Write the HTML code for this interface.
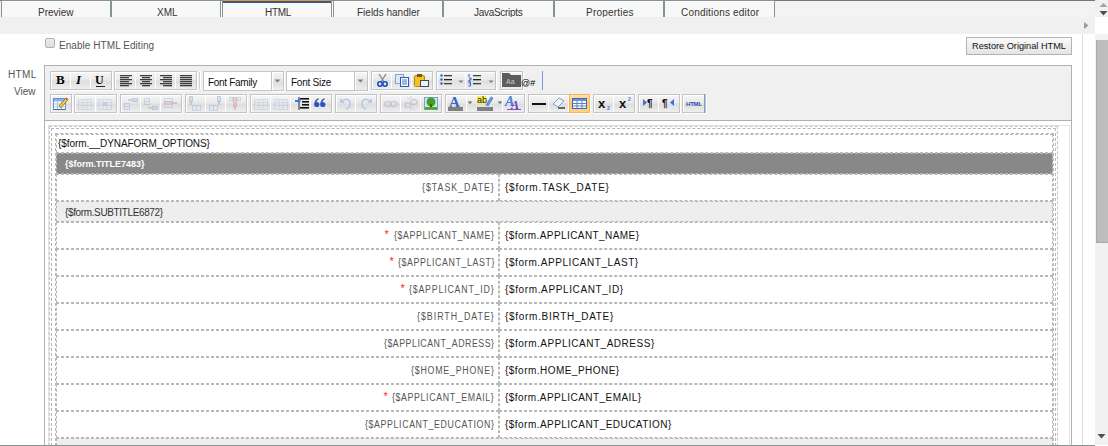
<!DOCTYPE html><html><head><meta charset="utf-8"><style>
*{margin:0;padding:0;box-sizing:border-box}
html,body{width:1108px;height:446px;overflow:hidden;background:#fff;font-family:"Liberation Sans",sans-serif;position:relative}
.abs{position:absolute}
.t{position:absolute;white-space:nowrap;line-height:1}
.grp{position:absolute;border:1px solid #c4c4c4;box-shadow:inset 1px 1px 0 #fff,1px 1px 0 #fff;background:linear-gradient(#f6f6f6,#e9e9e9 45%,#dedede 55%,#eeeeee)}
.bd{position:absolute;top:0;bottom:0;width:1px;background:#fff}
.dh{position:absolute;height:1px;background-image:linear-gradient(to right,#bbb 50%,transparent 50%);background-size:6px 1px}
.dv{position:absolute;width:1px;background-image:linear-gradient(to bottom,#bbb 50%,transparent 50%);background-size:1px 6px}
</style></head><body>
<div class="abs" style="left:0;top:0;width:1095px;height:17px;background:#f3f3f3;border-top:1px solid #787878"></div>
<div class="abs" style="left:1px;top:0;width:110px;height:17px;background:#f8f8f8;border-left:1px solid #879292;border-right:1px solid #879292;border-top:1px solid #879292"></div>
<div class="abs" style="left:2px;top:1px;width:108px;height:1px;background:#fff"></div>
<div class="t" style="left:38.00px;top:7.5px;letter-spacing:0.000px;font-size:10px;color:#333">Preview</div>
<div class="abs" style="left:111px;top:0;width:110px;height:17px;background:#f8f8f8;border-left:1px solid #879292;border-right:1px solid #879292;border-top:1px solid #879292"></div>
<div class="abs" style="left:112px;top:1px;width:108px;height:1px;background:#fff"></div>
<div class="t" style="left:157.00px;top:7.5px;letter-spacing:0.000px;font-size:10px;color:#333">XML</div>
<div class="abs" style="left:222px;top:0;width:110px;height:17px;background:#f8f8f8;border-left:1px solid #879292;border-right:1px solid #879292;border-top:1px solid #879292"></div>
<div class="abs" style="left:223px;top:1px;width:108px;height:1px;background:#fff"></div>
<div class="abs" style="left:223px;top:0;width:108px;height:1px;background:#f7941d"></div>
<div class="abs" style="left:223px;top:1px;width:108px;height:2px;background:#2c5a9e"></div>
<div class="t" style="left:265.00px;top:7.5px;letter-spacing:-0.333px;font-size:10px;color:#333">HTML</div>
<div class="abs" style="left:333px;top:0;width:110px;height:17px;background:#f8f8f8;border-left:1px solid #879292;border-right:1px solid #879292;border-top:1px solid #879292"></div>
<div class="abs" style="left:334px;top:1px;width:108px;height:1px;background:#fff"></div>
<div class="t" style="left:357.00px;top:7.5px;letter-spacing:0.000px;font-size:10px;color:#333">Fields handler</div>
<div class="abs" style="left:443px;top:0;width:111px;height:17px;background:#f8f8f8;border-left:1px solid #879292;border-right:1px solid #879292;border-top:1px solid #879292"></div>
<div class="abs" style="left:444px;top:1px;width:109px;height:1px;background:#fff"></div>
<div class="t" style="left:474.00px;top:7.5px;letter-spacing:-0.300px;font-size:10px;color:#333">JavaScripts</div>
<div class="abs" style="left:554px;top:0;width:110px;height:17px;background:#f8f8f8;border-left:1px solid #879292;border-right:1px solid #879292;border-top:1px solid #879292"></div>
<div class="abs" style="left:555px;top:1px;width:108px;height:1px;background:#fff"></div>
<div class="t" style="left:586.00px;top:7.5px;letter-spacing:0.222px;font-size:10px;color:#333">Properties</div>
<div class="abs" style="left:664px;top:0;width:111px;height:17px;background:#f8f8f8;border-left:1px solid #879292;border-right:1px solid #879292;border-top:1px solid #879292"></div>
<div class="abs" style="left:665px;top:1px;width:109px;height:1px;background:#fff"></div>
<div class="t" style="left:681.00px;top:7.5px;letter-spacing:0.188px;font-size:10px;color:#333">Conditions editor</div>
<div class="abs" style="left:221px;top:1px;width:1px;height:16px;background:#fff"></div>
<div class="abs" style="left:332px;top:1px;width:1px;height:16px;background:#fff"></div>
<div class="abs" style="left:1095px;top:0;width:13px;height:17px;background:#f1f1f1"></div>
<svg class="abs" style="left:1095px;top:0" width="13" height="17"><path d="M5 3 L9 7 L1 7 Z" fill="#a3a3a3" transform="translate(3.5,0)"/><path d="M1 11 L9 11 L5 15.5 Z" fill="#505050" transform="translate(3.5,0)"/></svg>
<div class="abs" style="left:0;top:17px;width:1095px;height:17px;background:#f0f0f0"></div>
<svg class="abs" style="left:1083px;top:21px" width="8" height="10"><path d="M1 1 L5.5 4.5 L1 8 Z" fill="#9a9a9a"/></svg>
<div class="abs" style="left:1082px;top:34px;width:1px;height:411px;background:#dcdcdc"></div>
<div class="abs" style="left:1095px;top:34px;width:13px;height:411px;background:#f1f1f1"></div>
<div class="abs" style="left:1096px;top:40px;width:12px;height:203px;background:#bdbdbd;border-left:1px solid #aaa;border-bottom:1px solid #aaa"></div>
<svg class="abs" style="left:1095px;top:430px" width="13" height="12"><path d="M2.5 4 L10.5 4 L6.5 8.5 Z" fill="#505050"/></svg>
<div class="abs" style="left:0;top:445px;width:1095px;height:1px;background:#879292"></div>
<div class="abs" style="left:45px;top:38px;width:10px;height:10px;border:1px solid #b2b2b2;border-radius:2px;background:linear-gradient(#ececec,#dedede)"></div>
<div class="t" style="left:59.00px;top:41px;letter-spacing:0.056px;font-size:10px;color:#555">Enable HTML Editing</div>
<div class="abs" style="left:966px;top:37px;width:106px;height:18px;border:1px solid #b4b4b4;background:linear-gradient(#fbfbfb,#e4e4e4)"></div>
<div class="t" style="left:972.00px;top:42px;letter-spacing:0.000px;font-size:9.2px;color:#111">Restore Original HTML</div>
<div class="t" style="left:8.00px;top:70px;letter-spacing:0.333px;font-size:10px;color:#555">HTML</div>
<div class="t" style="left:14.00px;top:87px;letter-spacing:0.000px;font-size:10px;color:#555">View</div>
<div class="abs" style="left:44px;top:65px;width:1028px;height:400px;border:1px solid #b0b0b0;background:#f0f0f0"></div>
<div class="abs" style="left:44px;top:120px;width:1028px;height:340px;border:1px solid #b0b0b0;background:#fff"></div>
<div class="grp" style="left:50px;top:71px;width:62px;height:19px">
<div class="bd" style="left:19px"></div>
<div class="bd" style="left:39px"></div>
</div>
<div class="grp" style="left:114px;top:71px;width:83px;height:19px">
<div class="bd" style="left:20px"></div>
<div class="bd" style="left:40px"></div>
<div class="bd" style="left:60px"></div>
</div>
<div class="abs" style="left:199px;top:72px;width:1px;height:17px;background:#cfcfcf;box-shadow:1px 0 0 #fff"></div>
<div class="abs" style="left:203px;top:71px;width:69px;height:20px;background:#fff;border:1px solid #c6c6c6"></div>
<div class="grp" style="left:271px;top:71px;width:13px;height:20px"></div>
<svg class="abs" style="left:274px;top:79px" width="8" height="5"><path d="M0.5 0.5 L6.5 0.5 L3.5 3.5 Z" fill="#808080"/></svg>
<div class="t" style="left:208.00px;top:78px;letter-spacing:-0.300px;font-size:10px;color:#111">Font Family</div>
<div class="abs" style="left:286px;top:71px;width:69px;height:20px;background:#fff;border:1px solid #c6c6c6"></div>
<div class="grp" style="left:354px;top:71px;width:14px;height:20px"></div>
<svg class="abs" style="left:357px;top:79px" width="8" height="5"><path d="M0.5 0.5 L6.5 0.5 L3.5 3.5 Z" fill="#808080"/></svg>
<div class="t" style="left:291.00px;top:78px;letter-spacing:-0.250px;font-size:10px;color:#111">Font Size</div>
<div class="grp" style="left:371px;top:71px;width:62px;height:19px">
<div class="bd" style="left:19px"></div>
<div class="bd" style="left:39px"></div>
</div>
<div class="grp" style="left:436px;top:71px;width:60px;height:19px">
<div class="bd" style="left:28px"></div>
</div>
<div class="grp" style="left:500px;top:71px;width:23px;height:19px">
</div>
<div class="abs" style="left:542px;top:71px;width:1px;height:19px;background:#7d9bd8"></div>
<div class="grp" style="left:50px;top:94px;width:22px;height:19px">
</div>
<div class="grp" style="left:74px;top:94px;width:43px;height:19px">
<div class="bd" style="left:20px"></div>
</div>
<div class="grp" style="left:120px;top:94px;width:62px;height:19px">
<div class="bd" style="left:19px"></div>
<div class="bd" style="left:39px"></div>
</div>
<div class="grp" style="left:185px;top:94px;width:62px;height:19px">
<div class="bd" style="left:19px"></div>
<div class="bd" style="left:39px"></div>
</div>
<div class="grp" style="left:250px;top:94px;width:82px;height:19px">
<div class="bd" style="left:19px"></div>
<div class="bd" style="left:39px"></div>
<div class="bd" style="left:59px"></div>
</div>
<div class="grp" style="left:335px;top:94px;width:42px;height:19px">
<div class="bd" style="left:19px"></div>
</div>
<div class="grp" style="left:380px;top:94px;width:62px;height:19px">
<div class="bd" style="left:19px"></div>
<div class="bd" style="left:39px"></div>
</div>
<div class="grp" style="left:445px;top:94px;width:80px;height:19px">
<div class="bd" style="left:20px"></div>
<div class="bd" style="left:56px"></div>
</div>
<div class="grp" style="left:528px;top:94px;width:62px;height:19px">
<div class="bd" style="left:19px"></div>
<div class="bd" style="left:39px"></div>
</div>
<div class="grp" style="left:593px;top:94px;width:42px;height:19px">
<div class="bd" style="left:19px"></div>
</div>
<div class="grp" style="left:638px;top:94px;width:42px;height:19px">
<div class="bd" style="left:19px"></div>
</div>
<div class="grp" style="left:682px;top:94px;width:24px;height:19px">
</div>
<div class="abs" style="left:569px;top:94px;width:21px;height:19px;border:1px solid #f2b45a;background:linear-gradient(#ffe3a8,#ffc76a 50%,#ffd38a)"></div>
<div class="abs" style="left:704px;top:94px;width:1px;height:19px;background:#7d9bd8"></div>
<div class="t" style="left:56px;top:72px;font:bold 13px 'Liberation Serif',serif;color:#000">B</div>
<div class="t" style="left:76px;top:72px;font:bold italic 13px 'Liberation Serif',serif;color:#000">I</div>
<div class="t" style="left:95px;top:73px;font:bold 12px 'Liberation Serif',serif;color:#000">U</div>
<div class="abs" style="left:96px;top:86px;width:9px;height:1px;background:#222"></div>
<svg class="abs" style="left:120px;top:75px" width="14" height="12" viewBox="0 0 14 12"><rect x="0" y="0" width="12" height="1.3" fill="#3c3c3c"/><rect x="0" y="2" width="9" height="1.3" fill="#3c3c3c"/><rect x="0" y="4" width="12" height="1.3" fill="#3c3c3c"/><rect x="0" y="6" width="9" height="1.3" fill="#3c3c3c"/><rect x="0" y="8" width="12" height="1.3" fill="#3c3c3c"/><rect x="0" y="10" width="9" height="1.3" fill="#3c3c3c"/></svg>
<svg class="abs" style="left:140px;top:75px" width="14" height="12" viewBox="0 0 14 12"><rect x="0" y="0" width="12" height="1.3" fill="#3c3c3c"/><rect x="2" y="2" width="8" height="1.3" fill="#3c3c3c"/><rect x="0" y="4" width="12" height="1.3" fill="#3c3c3c"/><rect x="2" y="6" width="8" height="1.3" fill="#3c3c3c"/><rect x="0" y="8" width="12" height="1.3" fill="#3c3c3c"/><rect x="2" y="10" width="8" height="1.3" fill="#3c3c3c"/></svg>
<svg class="abs" style="left:160px;top:75px" width="14" height="12" viewBox="0 0 14 12"><rect x="0" y="0" width="12" height="1.3" fill="#3c3c3c"/><rect x="3" y="2" width="9" height="1.3" fill="#3c3c3c"/><rect x="0" y="4" width="12" height="1.3" fill="#3c3c3c"/><rect x="3" y="6" width="9" height="1.3" fill="#3c3c3c"/><rect x="0" y="8" width="12" height="1.3" fill="#3c3c3c"/><rect x="3" y="10" width="9" height="1.3" fill="#3c3c3c"/></svg>
<svg class="abs" style="left:180px;top:75px" width="14" height="12" viewBox="0 0 14 12"><rect x="0" y="0" width="12" height="1.3" fill="#3c3c3c"/><rect x="0" y="2" width="12" height="1.3" fill="#3c3c3c"/><rect x="0" y="4" width="12" height="1.3" fill="#3c3c3c"/><rect x="0" y="6" width="12" height="1.3" fill="#3c3c3c"/><rect x="0" y="8" width="12" height="1.3" fill="#3c3c3c"/><rect x="0" y="10" width="12" height="1.3" fill="#3c3c3c"/></svg>
<svg class="abs" style="left:377px;top:74px" width="11" height="13" viewBox="0 0 11 13"><path d="M2 0 L7 8 M9 0 L4 8" stroke="#8090a0" stroke-width="1.4"/><circle cx="3" cy="10" r="2.2" fill="none" stroke="#1a4fc0" stroke-width="1.6"/><circle cx="8" cy="10" r="2.2" fill="none" stroke="#1a4fc0" stroke-width="1.6"/></svg>
<svg class="abs" style="left:395px;top:74px" width="15" height="13" viewBox="0 0 15 13"><rect x="0.5" y="0.5" width="8" height="9" fill="#dfe8f5" stroke="#8aa4c8"/><rect x="5.5" y="3.5" width="8" height="9" fill="#f4f8ff" stroke="#2a5cc0"/><path d="M7 6h5M7 8h5M7 10h5" stroke="#4a78d0"/></svg>
<svg class="abs" style="left:414px;top:74px" width="15" height="13" viewBox="0 0 15 13"><rect x="0.5" y="1.5" width="10" height="11" rx="1" fill="#f2c420" stroke="#b08a10"/><rect x="3" y="0" width="5" height="3" fill="#705a20"/><rect x="6.5" y="6.5" width="8" height="6" fill="#eef2f8" stroke="#404850"/></svg>
<svg class="abs" style="left:440px;top:74px" width="13" height="12" viewBox="0 0 13 12"><circle cx="1.5" cy="1.5" r="1.2" fill="#3060d0"/><circle cx="1.5" cy="5.5" r="1.2" fill="#3060d0"/><circle cx="1.5" cy="9.5" r="1.2" fill="#3060d0"/><rect x="4" y="1" width="8" height="1.3" fill="#404040"/><rect x="4" y="5" width="8" height="1.3" fill="#202020"/><rect x="4" y="9" width="8" height="1.3" fill="#404040"/></svg>
<svg class="abs" style="left:458px;top:80px" width="7" height="4" viewBox="0 0 7 4"><path d="M0.5 0.5 L5.5 0.5 L3 3 Z" fill="#808080"/></svg>
<svg class="abs" style="left:468px;top:74px" width="14" height="13" viewBox="0 0 14 13"><path d="M1 0v3M1 4h2v2h-2v2h2M0.5 9h2v3h-2" stroke="#3060d0" stroke-width="1" fill="none"/><rect x="5" y="1" width="8" height="1.3" fill="#404040"/><rect x="5" y="5" width="8" height="1.3" fill="#202020"/><rect x="5" y="9" width="8" height="1.3" fill="#404040"/></svg>
<svg class="abs" style="left:488px;top:80px" width="7" height="4" viewBox="0 0 7 4"><path d="M0.5 0.5 L5.5 0.5 L3 3 Z" fill="#808080"/></svg>
<svg class="abs" style="left:502px;top:73px" width="19" height="14" viewBox="0 0 19 14"><path d="M0 0h7l2 2h10v12h-19z" fill="#5c5c5c"/><text x="4" y="11" font-family="Liberation Sans" font-size="7" fill="#ccc">Aa</text></svg>
<div class="t" style="left:521px;top:79px;font-size:9px;color:#000">@#</div>
<svg class="abs" style="left:53px;top:97px" width="16" height="14" viewBox="0 0 16 14"><rect x="0.5" y="1.5" width="12" height="11" fill="#fff" stroke="#6a90c8"/><rect x="1" y="2" width="11" height="2.5" fill="#8ab4ec"/><path d="M0.5 7h12M0.5 9.8h12M4.5 4.5v8M8.5 4.5v8" stroke="#a8c0e4"/><path d="M0.5 12.5h12" stroke="#4a6aa0"/><path d="M6 9 L12.5 1.5 L14.5 3.2 L8 10.8 Z" fill="#f2d040" stroke="#705818" stroke-width="0.7"/><path d="M12.5 1.5 L13.5 0.5 L15.5 2.2 L14.5 3.2 Z" fill="#e06040"/></svg>
<svg class="abs" style="left:78px;top:99px" width="15" height="12" viewBox="0 0 15 12"><g opacity="0.3"><rect x="0.5" y="0.5" width="13" height="10" fill="#e8eef8" stroke="#9db3d8"/><path d="M0.5 3.5h13M0.5 6.5h13M5 0.5v10M9 0.5v10" stroke="#9db3d8" stroke-width="1" fill="none"/></g></svg>
<svg class="abs" style="left:98px;top:99px" width="15" height="12" viewBox="0 0 15 12"><g opacity="0.3"><rect x="0.5" y="0.5" width="13" height="10" fill="#e8eef8" stroke="#9db3d8"/><path d="M0.5 3.5h13M0.5 6.5h13M5 0.5v10M9 0.5v10" stroke="#9db3d8" stroke-width="1" fill="none"/><rect x="5" y="3.5" width="4" height="3" fill="#7a9ad8"/></g></svg>
<svg class="abs" style="left:124px;top:97px" width="14" height="14" viewBox="0 0 14 14"><g opacity="0.3"><rect x="0.5" y="6.5" width="5" height="3" fill="#dde6f4" stroke="#7a9ad8"/><rect x="0.5" y="9.5" width="5" height="3" fill="#dde6f4" stroke="#7a9ad8"/><rect x="8.5" y="1.5" width="5" height="3" fill="#9ab8e8" stroke="#5a7ab8"/><path d="M4 3h4" stroke="#333"/></g></svg>
<svg class="abs" style="left:144px;top:97px" width="14" height="14" viewBox="0 0 14 14"><g opacity="0.3"><rect x="0.5" y="1.5" width="5" height="3" fill="#dde6f4" stroke="#7a9ad8"/><rect x="0.5" y="4.5" width="5" height="3" fill="#dde6f4" stroke="#7a9ad8"/><rect x="8.5" y="9.5" width="5" height="3" fill="#9ab8e8" stroke="#5a7ab8"/><path d="M4 11h4" stroke="#333"/></g></svg>
<svg class="abs" style="left:164px;top:97px" width="14" height="14" viewBox="0 0 14 14"><g opacity="0.3"><rect x="0.5" y="1.5" width="8" height="3" fill="#dde6f4" stroke="#7a9ad8"/><rect x="0.5" y="4.5" width="8" height="3" fill="#f08080" stroke="#c05050"/><rect x="0.5" y="7.5" width="8" height="3" fill="#dde6f4" stroke="#7a9ad8"/><path d="M8 6h5" stroke="#333"/></g></svg>
<svg class="abs" style="left:188px;top:96px" width="14" height="15" viewBox="0 0 14 15"><g opacity="0.3"><rect x="1.5" y="0.5" width="3" height="5" fill="#9ab8e8" stroke="#5a7ab8"/><path d="M3 5v4" stroke="#333"/><rect x="4.5" y="9.5" width="4" height="5" fill="#dde6f4" stroke="#7a9ad8"/><rect x="8.5" y="9.5" width="4" height="5" fill="#dde6f4" stroke="#7a9ad8"/></g></svg>
<svg class="abs" style="left:208px;top:96px" width="14" height="15" viewBox="0 0 14 15"><g opacity="0.3"><rect x="9.5" y="0.5" width="3" height="5" fill="#9ab8e8" stroke="#5a7ab8"/><path d="M11 5v4" stroke="#333"/><rect x="1.5" y="9.5" width="4" height="5" fill="#dde6f4" stroke="#7a9ad8"/><rect x="5.5" y="9.5" width="4" height="5" fill="#dde6f4" stroke="#7a9ad8"/></g></svg>
<svg class="abs" style="left:228px;top:96px" width="14" height="15" viewBox="0 0 14 15"><g opacity="0.3"><rect x="5.5" y="1.5" width="3" height="9" fill="#f08080" stroke="#c05050"/><rect x="1.5" y="1.5" width="3" height="3" fill="#dde6f4" stroke="#7a9ad8"/><rect x="9.5" y="1.5" width="3" height="3" fill="#dde6f4" stroke="#7a9ad8"/><path d="M7 10v4" stroke="#333"/></g></svg>
<svg class="abs" style="left:254px;top:99px" width="15" height="12" viewBox="0 0 15 12"><g opacity="0.3"><rect x="0.5" y="0.5" width="13" height="10" fill="#e8eef8" stroke="#9db3d8"/><path d="M0.5 3.5h13M0.5 6.5h13M5 0.5v10M9 0.5v10" stroke="#9db3d8" stroke-width="1" fill="none"/></g></svg>
<svg class="abs" style="left:274px;top:99px" width="15" height="12" viewBox="0 0 15 12"><g opacity="0.3"><rect x="0.5" y="0.5" width="13" height="10" fill="#e8eef8" stroke="#9db3d8"/><path d="M0.5 3.5h13M0.5 6.5h13M5 0.5v10M9 0.5v10" stroke="#9db3d8" stroke-width="1" fill="none"/></g></svg>
<svg class="abs" style="left:295px;top:96px" width="14" height="15" viewBox="0 0 14 15"><path d="M4 1v13" stroke="#333"/><path d="M0 4h3l0-2 3 3-3 3v-2h-3z" fill="#3a7ae0"/><rect x="5" y="2" width="9" height="1.6" fill="#111"/><rect x="7" y="5" width="7" height="1.6" fill="#111"/><rect x="7" y="8" width="7" height="1.6" fill="#111"/><rect x="5" y="11" width="9" height="1.6" fill="#111"/></svg>
<svg class="abs" style="left:314px;top:98px" width="12" height="10" viewBox="0 0 12 10"><g fill="#2a58c0"><circle cx="2.8" cy="6.5" r="2.6"/><path d="M0.3 6.5 Q0.3 1.5 4.5 0.3 L4.8 1.3 Q2.3 2.5 2.3 5 Z"/><circle cx="8.8" cy="6.5" r="2.6"/><path d="M6.3 6.5 Q6.3 1.5 10.5 0.3 L10.8 1.3 Q8.3 2.5 8.3 5 Z"/></g></svg>
<svg class="abs" style="left:339px;top:97px" width="14" height="13" viewBox="0 0 14 13"><path d="M3 4 Q8 0 11 5 Q12 10 7 12" stroke="#b4c8ec" stroke-width="1.6" fill="none"/><path d="M1 1 L1 6 L6 6 Z" fill="#b4c8ec"/></svg>
<svg class="abs" style="left:359px;top:97px" width="14" height="13" viewBox="0 0 14 13"><path d="M11 4 Q6 0 3 5 Q2 10 7 12" stroke="#b4c8ec" stroke-width="1.6" fill="none"/><path d="M13 1 L13 6 L8 6 Z" fill="#b4c8ec"/></svg>
<svg class="abs" style="left:384px;top:98px" width="14" height="12" viewBox="0 0 14 12"><g opacity="0.3"><ellipse cx="4" cy="6" rx="3.5" ry="2.5" fill="none" stroke="#8090b0" stroke-width="1.4"/><ellipse cx="9.5" cy="6" rx="3.5" ry="2.5" fill="none" stroke="#8090b0" stroke-width="1.4"/></g></svg>
<svg class="abs" style="left:404px;top:96px" width="14" height="15" viewBox="0 0 14 15"><g opacity="0.3"><ellipse cx="4" cy="9" rx="3" ry="2.5" fill="none" stroke="#8090b0" stroke-width="1.4"/><ellipse cx="10" cy="6" rx="3" ry="2.5" fill="none" stroke="#8090b0" stroke-width="1.4"/><path d="M3 1l3 3M11 14l-3-3M7 0v3M7 12v3" stroke="#8090b0"/></g></svg>
<svg class="abs" style="left:424px;top:97px" width="14" height="13" viewBox="0 0 14 13"><rect x="0.5" y="0.5" width="13" height="12" fill="#cfe8ff" stroke="#80a0c0"/><circle cx="7" cy="5" r="4.5" fill="#40a020"/><rect x="6" y="7" width="2" height="4" fill="#804010"/><rect x="1" y="10" width="12" height="2.5" fill="#40b020"/></svg>
<div class="t" style="left:449px;top:94px;font:bold 15px 'Liberation Serif',serif;color:#3866c0">A</div>
<div class="abs" style="left:448px;top:107px;width:15px;height:4px;background:#808080"></div>
<svg class="abs" style="left:467px;top:101px" width="7" height="4" viewBox="0 0 7 4"><path d="M0.5 0.5 L5.5 0.5 L3 3 Z" fill="#707070"/></svg>
<div class="abs" style="left:477px;top:96px;width:9px;height:8px;background:#f8f050"></div>
<div class="t" style="left:477px;top:96px;font-size:9px;color:#222">ab</div>
<svg class="abs" style="left:485px;top:96px" width="8" height="10" viewBox="0 0 8 10"><path d="M1 9 L6 1 L8 2 L3 10 Z" fill="#6a9ae0" stroke="#3a60b0" stroke-width="0.6"/></svg>
<div class="abs" style="left:477px;top:107px;width:16px;height:4px;background:#808080"></div>
<svg class="abs" style="left:497px;top:101px" width="7" height="4" viewBox="0 0 7 4"><path d="M0.5 0.5 L5.5 0.5 L3 3 Z" fill="#707070"/></svg>
<div class="t" style="left:505px;top:94px;font:bold italic 14px 'Liberation Serif',serif;color:#4a80e0">A</div>
<div class="t" style="left:511px;top:98px;font:bold italic 12px 'Liberation Serif',serif;color:#6a3ac0">A</div>
<div class="abs" style="left:507px;top:109px;width:14px;height:1px;background:#8050d0"></div>
<div class="abs" style="left:532px;top:103px;width:14px;height:2px;background:#111"></div>
<svg class="abs" style="left:552px;top:97px" width="14" height="12" viewBox="0 0 14 12"><path d="M1 7 L7 1 L12 4 L6 10 Z" fill="#eef2fa" stroke="#7088b0" stroke-width="0.8"/><path d="M6 11h7" stroke="#222" stroke-width="1.3"/></svg>
<svg class="abs" style="left:572px;top:98px" width="15" height="11" viewBox="0 0 15 11"><rect x="0.5" y="0.5" width="14" height="10" fill="#fff" stroke="#3a66b8"/><rect x="1" y="1" width="13" height="2" fill="#6a90d8"/><path d="M0.5 5.5h14M0.5 8h14M5 3v7.5M10 3v7.5" stroke="#5a80c8"/></svg>
<div class="t" style="left:598px;top:96px;font:bold 13px 'Liberation Sans',sans-serif;color:#111">x</div>
<div class="t" style="left:607px;top:105px;font:bold 5px 'Liberation Sans',sans-serif;color:#3a70e0">2</div>
<div class="t" style="left:619px;top:96px;font:bold 13px 'Liberation Sans',sans-serif;color:#111">x</div>
<div class="t" style="left:628px;top:96px;font:bold 5px 'Liberation Sans',sans-serif;color:#3a70e0">2</div>
<svg class="abs" style="left:643px;top:99px" width="5" height="8" viewBox="0 0 5 8"><path d="M0 0 L4 3.5 L0 7 Z" fill="#3a70e0"/></svg>
<div class="t" style="left:647px;top:98px;font:bold 10px 'Liberation Sans',sans-serif;color:#111">&#182;</div>
<div class="t" style="left:662px;top:98px;font:bold 10px 'Liberation Sans',sans-serif;color:#111">&#182;</div>
<svg class="abs" style="left:670px;top:99px" width="5" height="8" viewBox="0 0 5 8"><path d="M4 0 L0 3.5 L4 7 Z" fill="#3a70e0"/></svg>
<div class="t" style="left:686px;top:101px;font:bold 6px 'Liberation Sans',sans-serif;color:#2a4ea8;letter-spacing:-0.2px">HTML</div>
<div class="abs" style="left:48px;top:125px;width:1022px;height:330px;border:1px solid #e2e2e2"></div>
<div class="abs" style="left:49px;top:126px;width:1009px;height:345px;border:1px dashed #c4c4c4;"></div>
<div class="abs" style="left:51px;top:128px;width:1005px;height:343px;border:1px dashed #b8b8b8;"></div>
<div class="abs" style="left:55px;top:133px;width:999px;height:338px;border:1px dashed #b8b8b8;"></div>
<div class="abs" style="left:56px;top:134px;width:997px;height:19px;border:1px dashed #b8b8b8;"></div>
<div class="t" style="left:58.00px;top:139px;letter-spacing:-0.080px;font-size:10px;color:#111">{$form.__DYNAFORM_OPTIONS}</div>
<div class="abs" style="left:56px;top:153px;width:997px;height:21px;border:1px dashed #b8b8b8;background:#888;"></div>
<div class="t" style="left:65.00px;top:159px;letter-spacing:0.000px;font:bold 9px 'Liberation Sans',sans-serif;color:#fff">{$form.TITLE7483}</div>
<div class="abs" style="left:56px;top:174px;width:443px;height:27px;border:1px dashed #b8b8b8;"></div>
<div class="abs" style="left:499px;top:174px;width:554px;height:27px;border:1px dashed #b8b8b8;"></div>
<div class="t" style="left:422.00px;top:183px;letter-spacing:1.136px;transform:scaleX(0.88);transform-origin:0 0;font-size:10px;color:#555">{$TASK_DATE}</div>
<div class="t" style="left:505.00px;top:183px;letter-spacing:0.750px;font-size:10px;color:#111">{$form.TASK_DATE}</div>
<div class="abs" style="left:56px;top:201px;width:997px;height:21px;border:1px dashed #b8b8b8;background:#eeeeee;"></div>
<div class="t" style="left:65.00px;top:207px;letter-spacing:-0.368px;font:10px 'Liberation Sans',sans-serif;color:#333">{$form.SUBTITLE6872}</div>
<div class="abs" style="left:56px;top:222px;width:443px;height:27px;border:1px dashed #b8b8b8;"></div>
<div class="abs" style="left:499px;top:222px;width:554px;height:27px;border:1px dashed #b8b8b8;"></div>
<div class="t" style="left:384.5px;top:229px;font-size:11px;color:#f22">*</div>
<div class="t" style="left:394.00px;top:231px;letter-spacing:0.698px;transform:scaleX(0.88);transform-origin:0 0;font-size:10px;color:#555">{$APPLICANT_NAME}</div>
<div class="t" style="left:505.00px;top:231px;letter-spacing:0.429px;font-size:10px;color:#111">{$form.APPLICANT_NAME}</div>
<div class="abs" style="left:56px;top:249px;width:443px;height:27px;border:1px dashed #b8b8b8;"></div>
<div class="abs" style="left:499px;top:249px;width:554px;height:27px;border:1px dashed #b8b8b8;"></div>
<div class="t" style="left:389.5px;top:256px;font-size:11px;color:#f22">*</div>
<div class="t" style="left:398.00px;top:258px;letter-spacing:0.698px;transform:scaleX(0.88);transform-origin:0 0;font-size:10px;color:#555">{$APPLICANT_LAST}</div>
<div class="t" style="left:505.00px;top:258px;letter-spacing:0.572px;font-size:10px;color:#111">{$form.APPLICANT_LAST}</div>
<div class="abs" style="left:56px;top:276px;width:443px;height:27px;border:1px dashed #b8b8b8;"></div>
<div class="abs" style="left:499px;top:276px;width:554px;height:27px;border:1px dashed #b8b8b8;"></div>
<div class="t" style="left:400.5px;top:283px;font-size:11px;color:#f22">*</div>
<div class="t" style="left:409.00px;top:285px;letter-spacing:0.913px;transform:scaleX(0.88);transform-origin:0 0;font-size:10px;color:#555">{$APPLICANT_ID}</div>
<div class="t" style="left:505.00px;top:285px;letter-spacing:0.632px;font-size:10px;color:#111">{$form.APPLICANT_ID}</div>
<div class="abs" style="left:56px;top:303px;width:443px;height:27px;border:1px dashed #b8b8b8;"></div>
<div class="abs" style="left:499px;top:303px;width:554px;height:27px;border:1px dashed #b8b8b8;"></div>
<div class="t" style="left:417.00px;top:312px;letter-spacing:1.136px;transform:scaleX(0.88);transform-origin:0 0;font-size:10px;color:#555">{$BIRTH_DATE}</div>
<div class="t" style="left:505.00px;top:312px;letter-spacing:0.706px;font-size:10px;color:#111">{$form.BIRTH_DATE}</div>
<div class="abs" style="left:56px;top:330px;width:443px;height:27px;border:1px dashed #b8b8b8;"></div>
<div class="abs" style="left:499px;top:330px;width:554px;height:27px;border:1px dashed #b8b8b8;"></div>
<div class="t" style="left:384.00px;top:339px;letter-spacing:0.582px;transform:scaleX(0.88);transform-origin:0 0;font-size:10px;color:#555">{$APPLICANT_ADRESS}</div>
<div class="t" style="left:505.00px;top:339px;letter-spacing:0.521px;font-size:10px;color:#111">{$form.APPLICANT_ADRESS}</div>
<div class="abs" style="left:56px;top:357px;width:443px;height:27px;border:1px dashed #b8b8b8;"></div>
<div class="abs" style="left:499px;top:357px;width:554px;height:27px;border:1px dashed #b8b8b8;"></div>
<div class="t" style="left:411.00px;top:366px;letter-spacing:0.897px;transform:scaleX(0.88);transform-origin:0 0;font-size:10px;color:#555">{$HOME_PHONE}</div>
<div class="t" style="left:505.00px;top:366px;letter-spacing:0.471px;font-size:10px;color:#111">{$form.HOME_PHONE}</div>
<div class="abs" style="left:56px;top:384px;width:443px;height:27px;border:1px dashed #b8b8b8;"></div>
<div class="abs" style="left:499px;top:384px;width:554px;height:27px;border:1px dashed #b8b8b8;"></div>
<div class="t" style="left:383.5px;top:391px;font-size:11px;color:#f22">*</div>
<div class="t" style="left:392.00px;top:393px;letter-spacing:0.715px;transform:scaleX(0.88);transform-origin:0 0;font-size:10px;color:#555">{$APPLICANT_EMAIL}</div>
<div class="t" style="left:505.00px;top:393px;letter-spacing:0.454px;font-size:10px;color:#111">{$form.APPLICANT_EMAIL}</div>
<div class="abs" style="left:56px;top:411px;width:443px;height:27px;border:1px dashed #b8b8b8;"></div>
<div class="abs" style="left:499px;top:411px;width:554px;height:27px;border:1px dashed #b8b8b8;"></div>
<div class="t" style="left:365.00px;top:420px;letter-spacing:0.709px;transform:scaleX(0.88);transform-origin:0 0;font-size:10px;color:#555">{$APPLICANT_EDUCATION}</div>
<div class="t" style="left:505.00px;top:420px;letter-spacing:0.462px;font-size:10px;color:#111">{$form.APPLICANT_EDUCATION}</div>
<div class="abs" style="left:56px;top:438px;width:997px;height:33px;border:1px dashed #b8b8b8;background:#eeeeee;"></div>
<div class="abs" style="left:0;top:445px;width:1095px;height:1px;background:#879292"></div>
</body></html>
